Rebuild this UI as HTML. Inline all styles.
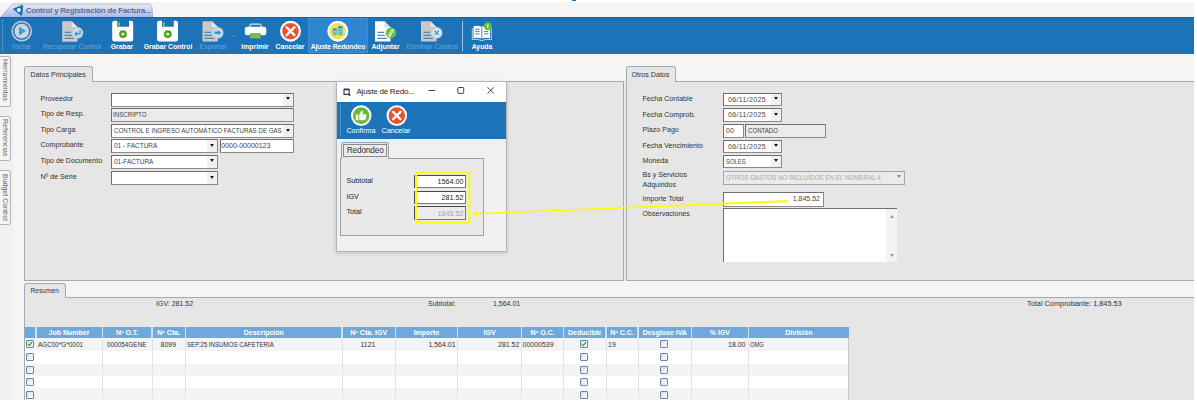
<!DOCTYPE html>
<html lang="es">
<head>
<meta charset="utf-8">
<title>Control y Registración de Facturas</title>
<style>
html,body{margin:0;padding:0;}
body{width:1197px;height:410px;overflow:hidden;background:#fff;position:relative;font-family:"Liberation Sans",sans-serif;font-size:7.2px;color:#3a3a3a;}
div,span,svg,i{position:absolute;box-sizing:border-box;}
.t{white-space:nowrap;line-height:10px;height:10px;}
#app{left:0;top:2px;width:1194px;height:398px;background:#f5f5f5;overflow:hidden;}
#tb{left:0;top:14.7px;width:1194px;height:37.3px;background:#1d73b7;box-shadow:inset 0 1px 0 #17629f;}
.tl{color:#fff;font-weight:bold;font-size:6.85px;top:25.1px;text-align:center;}
.tl.d{color:#6ba6db;font-weight:normal;font-size:7.2px;}
.panel{background:#e6e6e6;border:1px solid #a2abb1;}
.tab{background:#e6e6e6;border:1px solid #a2abb1;border-bottom:none;border-radius:3px 3px 0 0;}
.f{background:#fff;border:1px solid #6e6e6e;border-right-color:#8a8a8a;border-bottom-color:#8a8a8a;height:14px;}
.f.g{background:#ebebeb;}
.f.dd{background:linear-gradient(to left,#f0f0f0 9.5px,#fff 9.5px);}
.f.g.dd{background:#ebebeb;}
.f .t{left:2px;top:1px;color:#444;font-size:7px;}
.arr{width:0;height:0;border-left:2.5px solid transparent;border-right:2.5px solid transparent;border-top:3px solid #1a1a1a;right:2.6px;top:3.6px;}
.lb{font-size:7.1px;color:#333;}
.u{transform:scaleX(.88);transform-origin:0 50%;}
.vt{transform-origin:0 0;transform:rotate(90deg);font-size:7px;color:#666;}
.sidetab{left:-1px;width:11.5px;background:#f5f5f5;border:1px solid #b4b4b4;border-left:none;border-radius:0 3px 3px 0;}
.th{top:0;height:11px;background:#6fa8dc;color:#fff;font-weight:bold;font-size:7px;text-align:center;line-height:11px;white-space:nowrap;overflow:hidden;}
.row{left:0;width:824px;height:12.3px;}
.cb{width:8px;height:8px;border-radius:1px;border:1px solid #6685b2;background:linear-gradient(135deg,#dcdcdc,#fff);}
.vl{top:11px;width:1px;height:62px;background:#e3e3e3;}
.c{font-size:7px;color:#333;}
.dl{text-align:center;color:#fff;font-size:7.2px;}
</style>
</head>
<body>
<div style="left:572px;top:0;width:4px;height:1px;background:#1d73b7"></div>
<div id="app">
  <!-- document tab -->
  <svg style="left:0;top:1px;width:160px;height:15px" viewBox="0 0 160 15">
    <defs><linearGradient id="tg" x1="0" y1="0" x2="0" y2="1"><stop offset="0" stop-color="#e6ecf9"/><stop offset="1" stop-color="#9fb6ea"/></linearGradient></defs>
    <path d="M0 15 L11 2.5 Q12.5 1 15 1 L149 1 Q151.5 1 151.8 3 L153 15 Z" fill="url(#tg)" stroke="#a9a6ac" stroke-width="0.7"/>
    <path d="M13.2 6 L22.2 2.3 Q22.9 2.2 22.8 3 L21.9 11.8 Q21.6 12.6 20.9 12.1 Z" fill="#1d6fb5" stroke="#1d6fb5" stroke-width="0.8" stroke-linejoin="round"/>
    <circle cx="18.9" cy="7" r="1.9" fill="#fff"/>
  </svg>
  <span id="doctab" class="t" style="left:25.7px;top:3.6px;font-size:7.8px;font-weight:bold;color:#6a6a82;letter-spacing:-0.17px">Control y Registración de Factura...</span>

  <!-- toolbar -->
  <div id="tb">
    <div style="left:2px;top:3.6px;width:1px;height:31px;border-left:1px dotted #7fb0de"></div>
    <div style="left:308px;top:1.6px;width:60px;height:34.6px;background:#2e86d0;border:1px solid #3a8fd8"></div>
    <div style="left:462px;top:4.6px;width:1.4px;height:29.3px;background:#9fc4e6"></div>
    <svg style="left:0;top:0;width:520px;height:37px" viewBox="0 16.7 520 37">
      <!-- Iniciar -->
      <circle cx="21.7" cy="30.8" r="9.6" fill="#2a7cc0" stroke="#c4c8cc" stroke-width="1.5"/>
      <circle cx="21.7" cy="30.8" r="7.3" fill="#cfd6dc"/>
      <path d="M19 26.5 L26 30.8 L19 35.1 Z" fill="#2e9fe3"/>
      <!-- Recuperar Control -->
      <path d="M62.2 21 H71.7 L77.5 26.8 V41.4 H62.2 Z" fill="#c9c9c9"/>
      <path d="M71.7 21 L77.5 26.8 H71.7 Z" fill="#e6e6e6"/>
      <path d="M64.5 32 H71 M64.5 35 H72 M64.5 38 H74" stroke="#2678bb" stroke-width="1"/>
      <circle cx="77.5" cy="32.5" r="5.2" fill="#c6dff2" stroke="#c9c9c9" stroke-width="1.2"/>
      <path d="M80 30 V33.5 H75.5 M77 31.8 L75.2 33.5 L77 35.2" fill="none" stroke="#2a8fd6" stroke-width="1.3"/>
      <!-- Grabar -->
      <path d="M112.2 23 Q112.2 20.5 114.7 20.5 H117.2 V26.5 H129 V20.5 H130.7 Q133.2 20.5 133.2 23 V38.8 Q133.2 41.3 130.7 41.3 H114.7 Q112.2 41.3 112.2 38.8 Z" fill="#fff"/>
      <rect x="118.2" y="22" width="1.8" height="3.8" fill="#84cc20"/>
      <circle cx="123" cy="33.8" r="3.9" fill="#4aa31e"/>
      <circle cx="123" cy="33.8" r="1.6" fill="#e3f5cf"/>
      <!-- Grabar Control -->
      <path d="M157 23 Q157 20.5 159.5 20.5 H162 V26.5 H173.8 V20.5 H175.5 Q178 20.5 178 23 V38.8 Q178 41.3 175.5 41.3 H159.5 Q157 41.3 157 38.8 Z" fill="#fff"/>
      <rect x="163" y="22" width="1.8" height="3.8" fill="#84cc20"/>
      <circle cx="167.8" cy="33.8" r="3.9" fill="#4aa31e"/>
      <circle cx="167.8" cy="33.8" r="1.6" fill="#e3f5cf"/>
      <!-- Exportar -->
      <path d="M202.5 21 H212 L217.8 26.8 V41.3 H202.5 Z" fill="#c9c9c9"/>
      <path d="M212 21 L217.8 26.8 H212 Z" fill="#e6e6e6"/>
      <path d="M204.5 32 H211 M204.5 35 H212 M204.5 38 H214" stroke="#2678bb" stroke-width="1"/>
      <circle cx="217.8" cy="32.5" r="5.2" fill="#c6dff2" stroke="#c9c9c9" stroke-width="1.2"/>
      <path d="M214.5 31.3 H218 V29.7 L221.3 32.5 L218 35.3 V33.7 H214.5 Z" fill="#2a9be0"/>
      <path d="M232 35 H235.2 L233.6 36.6 Z" fill="#5f9fd6"/>
      <!-- Imprimir -->
      <rect x="250" y="23.8" width="11" height="4" rx="0.8" fill="none" stroke="#fff" stroke-width="1"/>
      <rect x="244.8" y="26.5" width="21.5" height="8.4" rx="2.2" fill="#fff"/>
      <rect x="249.8" y="33.4" width="11.2" height="5" rx="1.2" fill="#7ac043" stroke="#1d73b7" stroke-width="0.6"/>
      <!-- Cancelar -->
      <circle cx="290.5" cy="30.9" r="9.4" fill="#e9532d" stroke="#fff" stroke-width="2.2"/>
      <path d="M286.6 27 L294.4 34.8 M294.4 27 L286.6 34.8" stroke="#fff" stroke-width="2.3" stroke-linecap="round"/>
      <!-- Ajuste Redondeo -->
      <circle cx="337.8" cy="30.9" r="9.4" fill="#f3e155" stroke="#fff" stroke-width="2.2"/>
      <rect x="332.6" y="28.6" width="4.6" height="6.4" rx="1" fill="#5fb3b0"/>
      <rect x="337.8" y="26.4" width="5" height="8.6" rx="1" fill="#5fb3b0"/>
      <ellipse cx="334.9" cy="28.8" rx="2.3" ry="0.9" fill="#2f8fd0"/>
      <ellipse cx="340.3" cy="26.6" rx="2.5" ry="0.9" fill="#2f8fd0"/>
      <path d="M332.6 31 H337.2 M332.6 33 H337.2 M337.8 29 H342.8 M337.8 31 H342.8 M337.8 33 H342.8" stroke="#d8e38a" stroke-width="0.5"/>
      <!-- Adjuntar -->
      <path d="M375 21 H384.5 L390.5 27 V41.3 H375 Z" fill="#fff"/>
      <path d="M384.5 21 L390.5 27 H384.5 Z" fill="#cfe0f0"/>
      <path d="M377.5 32 H384 M377.5 35 H385 M377.5 38 H387" stroke="#1d73b7" stroke-width="1"/>
      <circle cx="391" cy="32.5" r="5.3" fill="#6cbf3a"/>
      <path d="M389.6 35 L392.4 30" stroke="#fff" stroke-width="2.6" stroke-linecap="round"/>
      <path d="M389.6 35 L392.4 30" stroke="#6cbf3a" stroke-width="0.9" stroke-linecap="round"/>
      <!-- Eliminar Control -->
      <path d="M421 21 H430.5 L436.5 27 V41.3 H421 Z" fill="#c9c9c9"/>
      <path d="M430.5 21 L436.5 27 H430.5 Z" fill="#e6e6e6"/>
      <path d="M423.5 32 H430 M423.5 35 H431 M423.5 38 H433" stroke="#2678bb" stroke-width="1"/>
      <circle cx="436.7" cy="32.5" r="5.2" fill="#d8e8f4" stroke="#c9c9c9" stroke-width="1.2"/>
      <path d="M434.6 30.4 L438.8 34.6 M438.8 30.4 L434.6 34.6" stroke="#2a9be0" stroke-width="1.3"/>
      <!-- Ayuda -->
      <path d="M473.5 26 Q477.5 24.6 481.4 26.3 V38.3 Q477.5 36.8 473.5 38 Z" fill="#fff"/>
      <path d="M490 26 Q486 24.6 482.2 26.3 V38.3 Q486 36.8 490 38 Z" fill="#fff"/>
      <path d="M472.3 28 V39.3 Q478 38.3 481.8 40.3 Q485.6 38.3 491.3 39.3 V28" fill="none" stroke="#cfe0f0" stroke-width="0.9"/>
      <path d="M475.3 29 H479.6 M475.3 31.3 H479.6 M475.3 33.6 H479.6 M484 31.3 H488.3 M484 33.6 H488.3" stroke="#1d73b7" stroke-width="0.9"/>
      <circle cx="487.8" cy="25.9" r="3.9" fill="#6cbf3a"/>
      <path d="M487.8 24 V27.8" stroke="#fff" stroke-width="1"/>
    </svg>
    <span class="t tl d" style="left:10px;width:23px">Iniciar</span>
    <span class="t tl d" style="left:41px;width:62px">Recuperar Control</span>
    <span class="t tl" style="left:108px;width:28px">Grabar</span>
    <span class="t tl" style="left:140px;width:56px">Grabar Control</span>
    <span class="t tl d" style="left:197px;width:32px">Exportar</span>
    <span class="t tl" style="left:239px;width:32px">Imprimir</span>
    <span class="t tl" style="left:274px;width:32px">Cancelar</span>
    <span class="t tl" style="left:308px;width:60px;letter-spacing:-0.12px">Ajuste Redondeo</span>
    <span class="t tl" style="left:369px;width:33px">Adjuntar</span>
    <span class="t tl d" style="left:402px;width:60px">Eliminar Control</span>
    <span class="t tl" style="left:470px;width:24px">Ayuda</span>
  </div>

  <!-- left vertical tabs -->
  <div style="left:0;top:52px;width:12.5px;height:346px;background:#f0f0f0"></div>
  <div class="sidetab" style="top:54px;height:50.7px"></div>
  <div class="sidetab" style="top:113.5px;height:45.8px"></div>
  <div class="sidetab" style="top:168.3px;height:54.3px"></div>
  <span class="t vt" style="left:9.5px;top:56.8px">Herramientas</span>
  <span class="t vt" style="left:9.5px;top:117.2px">Referencias</span>
  <span class="t vt" style="left:9.5px;top:172px">Budget Control</span>

  <!-- Datos Principales -->
  <div style="left:622px;top:80px;width:6px;height:198px;background:#ebebeb"></div>
  <div class="panel" style="left:24px;top:79px;width:600px;height:199.7px"></div>
  <div class="tab" style="left:24px;top:64.3px;width:68.5px;height:15.7px"></div>
  <span class="t lb" style="left:30.5px;top:67.5px">Datos Principales</span>

  <span class="t lb" style="left:40.5px;top:91.6px">Proveedor</span>
  <span class="t lb" style="left:40.5px;top:107.4px">Tipo de Resp.</span>
  <span class="t lb" style="left:40.5px;top:123px">Tipo Carga</span>
  <span class="t lb" style="left:40.5px;top:138.4px">Comprobante</span>
  <span class="t lb" style="left:40.5px;top:153.8px">Tipo de Documento</span>
  <span class="t lb" style="left:40.5px;top:170px">Nº de Serie</span>

  <div class="f dd" style="left:111px;top:90.5px;width:183px"><i class="arr"></i></div>
  <div class="f g" style="left:111px;top:106.4px;width:183px;height:13.4px"><span class="t u" style="left:0.5px">INSCRIPTO</span></div>
  <div class="f dd" style="left:111px;top:122px;width:183px"><span class="t u">CONTROL E INGRESO AUTOMÁTICO FACTURAS DE GAS</span><i class="arr"></i></div>
  <div class="f dd" style="left:111px;top:137px;width:107px"><span class="t u" style="transform:scaleX(.93)">01 - FACTURA</span><i class="arr"></i></div>
  <div class="f" style="left:219.5px;top:137px;width:74.5px"><span class="t" style="left:0.8px">0000-00000123</span></div>
  <div class="f dd" style="left:111px;top:152.8px;width:107px"><span class="t u" style="transform:scaleX(.92)">01-FACTURA</span><i class="arr"></i></div>
  <div class="f dd" style="left:111px;top:169.4px;width:107px"><i class="arr"></i></div>

  <!-- Otros Datos -->
  <div class="panel" style="left:626.4px;top:79px;width:570.6px;height:199.7px"></div>
  <div class="tab" style="left:626.4px;top:64.3px;width:49.8px;height:15.7px"></div>
  <span class="t lb" style="left:631.5px;top:67.5px">Otros Datos</span>

  <span class="t lb" style="left:642.5px;top:92px">Fecha Contable</span>
  <span class="t lb" style="left:642.5px;top:107.8px">Fecha Comprob.</span>
  <span class="t lb" style="left:642.5px;top:122.8px">Plazo Pago</span>
  <span class="t lb" style="left:642.5px;top:139px">Fecha Vencimiento</span>
  <span class="t lb" style="left:642.5px;top:154.4px">Moneda</span>
  <span class="t lb" style="left:642.5px;top:168px">Bs y Servicios</span>
  <span class="t lb" style="left:642.5px;top:177.7px">Adquiridos</span>
  <span class="t lb" style="left:642.5px;top:191.6px">Importe Total</span>
  <span class="t lb" style="left:642.5px;top:207.1px">Observaciones</span>

  <div class="f dd" style="left:723px;top:90.7px;width:58.5px;height:13.6px"><span class="t" style="left:4px;letter-spacing:.34px">06/11/2025</span><i class="arr"></i></div>
  <div class="f dd" style="left:723px;top:106.3px;width:58.5px;height:13.6px"><span class="t" style="left:4px;letter-spacing:.34px">06/11/2025</span><i class="arr"></i></div>
  <div class="f" style="left:723px;top:121.6px;width:20.5px"><span class="t">00</span></div>
  <div class="f g" style="left:745px;top:121.6px;width:81px"><span class="t u" style="transform:scaleX(.87)">CONTADO</span></div>
  <div class="f dd" style="left:723px;top:137.5px;width:58.5px;height:13.6px"><span class="t" style="left:4px;letter-spacing:.34px">06/11/2025</span><i class="arr"></i></div>
  <div class="f dd" style="left:723px;top:152.5px;width:58.5px;height:13.6px"><span class="t u" style="transform:scaleX(.84)">SOLES</span><i class="arr"></i></div>
  <div class="f g dd" style="left:722.5px;top:168.5px;width:182.5px;border-color:#a6a6a6"><span class="t u" style="color:#a9a9a9;transform:scaleX(.9)">OTROS GASTOS NO INCLUÍDOS EN EL NUMERAL 4</span><i class="arr" style="border-top-color:#8a8a8a"></i></div>
  <div class="f" style="left:722.5px;top:190.3px;width:101.5px;height:14.6px"><span class="t" style="left:auto;right:3px">1,845.52</span></div>
  <div style="left:722.5px;top:206.2px;width:174px;height:53.4px;background:#fff;border-top:1px solid #6e6e6e;border-left:1px solid #6e6e6e">
    <div style="right:0;top:0;width:11px;height:52.4px;background:#f3f3f3"></div>
    <i style="position:absolute;right:3px;top:5.5px;width:0;height:0;border-left:2.4px solid transparent;border-right:2.4px solid transparent;border-bottom:3px solid #9a9a9a"></i>
    <i style="position:absolute;right:3px;bottom:4.5px;width:0;height:0;border-left:2.4px solid transparent;border-right:2.4px solid transparent;border-top:3px solid #9a9a9a"></i>
  </div>

  <!-- Resumen -->
  <div class="panel" style="left:24px;top:295px;width:1173px;height:110px"></div>
  <div class="tab" style="left:24px;top:281px;width:42px;height:15px"></div>
  <span class="t lb" style="left:30.6px;top:283.8px;font-size:6.6px">Resumen</span>
  <span class="t lb" style="left:156px;top:297px;font-size:7px">IGV: 281.52</span>
  <span class="t lb" style="left:428px;top:297px;font-size:7px">Subtotal:</span>
  <span class="t lb" style="left:493px;top:297px;font-size:7px">1,564.01</span>
  <span class="t lb" style="left:1027px;top:297px;font-size:7.35px">Total Comprobante: 1,845.53</span>

  <!-- grid -->
  <div id="grid" style="left:25px;top:325px;width:824px;height:73px;background:#fff;overflow:hidden">
    <div class="row" style="top:11px;background:#f4f4f4;height:13.3px"></div>
    <div class="row" style="top:36.8px;background:#f4f4f4;height:12.2px"></div>
    <div class="row" style="top:61.4px;background:#f4f4f4;height:11.6px"></div>
    <div class="vl" style="left:76.5px"></div>
    <div class="vl" style="left:126.5px"></div>
    <div class="vl" style="left:160px"></div>
    <div class="vl" style="left:316.6px"></div>
    <div class="vl" style="left:370px"></div>
    <div class="vl" style="left:432px"></div>
    <div class="vl" style="left:496px"></div>
    <div class="vl" style="left:538px"></div>
    <div class="vl" style="left:580.5px"></div>
    <div class="vl" style="left:612.5px"></div>
    <div class="vl" style="left:666px"></div>
    <div class="vl" style="left:722.5px"></div>
    <div class="vl" style="left:823px;background:#c8c8c8"></div>

    <div style="left:0;top:0;width:824px;height:11px;background:#cfe0f1"></div>
    <div class="th" style="left:0;width:10.2px"></div>
    <div class="th" style="left:11.5px;width:65px">Job Number</div>
    <div class="th" style="left:77.8px;width:48.6px">Nº O.T.</div>
    <div class="th" style="left:127.6px;width:32.2px">Nº Cta.</div>
    <div class="th" style="left:161.2px;width:155.2px">Descripción</div>
    <div class="th" style="left:317.6px;width:52.2px">Nº Cta. IGV</div>
    <div class="th" style="left:371px;width:61px">Importe</div>
    <div class="th" style="left:433.2px;width:62.8px">IGV</div>
    <div class="th" style="left:497.2px;width:40.8px">Nº O.C.</div>
    <div class="th" style="left:539.2px;width:41.2px">Deducible</div>
    <div class="th" style="left:581.6px;width:30.8px">Nº C.C.</div>
    <div class="th" style="left:613.6px;width:52.4px">Desglose IVA</div>
    <div class="th" style="left:667.2px;width:55.4px">% IGV</div>
    <div class="th" style="left:723.8px;width:100.2px">División</div>

    <div class="cb" style="left:0.6px;top:13.4px"><svg style="left:0;top:0;width:6px;height:6px" viewBox="0 0 6 6"><path d="M1 3 L2.4 4.6 L5 1.2" fill="none" stroke="#2a9a2a" stroke-width="1.1"/></svg></div>
    <div class="cb" style="left:0.6px;top:26px"></div>
    <div class="cb" style="left:0.6px;top:38.7px"></div>
    <div class="cb" style="left:0.6px;top:51.3px"></div>
    <div class="cb" style="left:0.6px;top:63.7px"></div>

    <div class="cb" style="left:554.9px;top:13.4px"><svg style="left:0;top:0;width:6px;height:6px" viewBox="0 0 6 6"><path d="M1 3 L2.4 4.6 L5 1.2" fill="none" stroke="#2a9a2a" stroke-width="1.1"/></svg></div>
    <div class="cb" style="left:554.9px;top:26px"></div>
    <div class="cb" style="left:554.9px;top:38.7px"></div>
    <div class="cb" style="left:554.9px;top:51.3px"></div>
    <div class="cb" style="left:554.9px;top:63.7px"></div>

    <div class="cb" style="left:635px;top:13.4px"></div>
    <div class="cb" style="left:635px;top:26px"></div>
    <div class="cb" style="left:635px;top:38.7px"></div>
    <div class="cb" style="left:635px;top:51.3px"></div>
    <div class="cb" style="left:635px;top:63.7px"></div>

    <span class="t c u" style="left:12.5px;top:12.8px;transform:scaleX(.91)">AGC00*G*0001</span>
    <span class="t c u" style="left:81.7px;top:12.8px;transform:scaleX(.915)">000054GENE</span>
    <span class="t c" style="left:135.5px;top:12.8px">8099</span>
    <span class="t c u" style="left:161.7px;top:12.8px">SEP.25 INSUMOS CAFETERIA</span>
    <span class="t c" style="left:335.4px;top:12.8px">1121</span>
    <span class="t c" style="left:403.4px;top:12.8px">1,564.01</span>
    <span class="t c" style="left:473px;top:12.8px">281.52</span>
    <span class="t c" style="left:497.5px;top:12.8px">00000539</span>
    <span class="t c" style="left:583px;top:12.8px">19</span>
    <span class="t c" style="left:703px;top:12.8px">18.00</span>
    <span class="t c u" style="left:724.7px;top:12.8px;transform:scaleX(.82)">OMG</span>
  </div>

  <!-- dialog -->
  <div id="dlg" style="left:335.6px;top:79px;width:171.4px;height:170.5px;background:#f0f0f0;border:1px solid #b4b4b4;box-shadow:0 1px 4px rgba(0,0,0,0.16)">
   <div style="left:0.9px;top:0;width:168.5px;height:168.5px">
    <div style="left:-0.9px;top:0;width:169.4px;height:20px;background:#fff"></div>
    <svg style="left:5.5px;top:5.5px;width:9px;height:9px" viewBox="0 0 9 9"><path d="M1 1.6 H6.2 V6.4 H1 Z" fill="#fff" stroke="#2b3550" stroke-width="1.1"/><path d="M1 1.3 H6.2" stroke="#2b3550" stroke-width="1.6"/><path d="M5.4 5.6 L8 7 L6 8.2 Z" fill="#2b3550"/></svg>
    <span class="t" style="left:19px;top:4.8px;font-size:8px;letter-spacing:-0.22px;color:#1e1e1e">Ajuste de Redo...</span>
    <svg style="left:88px;top:2.4px;width:76px;height:13px" viewBox="0 0 76 13"><path d="M3.6 6.5 H10.2" stroke="#2a2a2a" stroke-width="0.9"/><rect x="32.8" y="3.5" width="5.9" height="5.9" rx="0.8" fill="none" stroke="#2a2a2a" stroke-width="0.9"/><path d="M62.6 3.3 L68.8 9.5 M68.8 3.3 L62.6 9.5" stroke="#2a2a2a" stroke-width="0.9"/></svg>
    <div style="left:-0.9px;top:20px;width:169.4px;height:37px;background:#1d73b7"></div>
    <div style="left:3px;top:23px;width:1px;height:31px;border-left:1px dotted #7fb0de"></div>
    <svg style="left:9.5px;top:21px;width:70px;height:26px" viewBox="347 103 70 26">
      <circle cx="361.2" cy="115.6" r="9.3" fill="#6ab53c" stroke="#fff" stroke-width="2"/>
      <path d="M355.8 114.6 H358.4 V120.2 H355.8 Z M359.2 114.8 L361.6 110.4 Q363.4 110.4 362.9 112.6 L362.5 114.2 H365.6 Q366.9 114.4 366.6 115.8 L365.6 119.4 Q365.3 120.2 364.4 120.2 H359.2 Z" fill="#f2f8e8"/>
      <circle cx="396.8" cy="115.6" r="9.3" fill="#e9532d" stroke="#fff" stroke-width="2"/>
      <path d="M393.1 111.9 L400.5 119.3 M400.5 111.9 L393.1 119.3" stroke="#fff" stroke-width="2.3" stroke-linecap="round"/>
    </svg>
    <span class="t dl" style="left:4.5px;top:44.3px;width:38px">Confirma</span>
    <span class="t dl" style="left:39.5px;top:44.3px;width:38px">Cancelar</span>

    <div style="left:3px;top:75.6px;width:143.5px;height:78.4px;border:1px solid #98a2ac;background:#e9e9e9"></div>
    <div style="left:4px;top:60px;width:47.5px;height:16.6px;border:1px solid #98a2ac;border-bottom:none;border-radius:3px 3px 0 0;background:#e9e9e9"></div>
    <div style="left:5.8px;top:61.8px;width:44px;height:13.4px;border:1px solid #8a8a8a;background:#ececec"></div>
    <span class="t" style="left:9.2px;top:63.5px;font-size:8.2px;letter-spacing:-0.1px;color:#333">Redondeo</span>

    <span class="t" style="left:9px;top:94.2px;font-size:7.2px;color:#222">Subtotal</span>
    <span class="t" style="left:9px;top:109.6px;font-size:7.2px;color:#222">IGV</span>
    <span class="t" style="left:9px;top:125.4px;font-size:7.2px;color:#222">Total</span>
    <div class="f" style="left:76.6px;top:92.6px;width:51.8px;height:13.4px;border-color:#4a4a4a #777 #777 #4a4a4a"><span class="t" style="left:auto;right:1.3px;top:1.3px;color:#222;font-size:7.2px">1564.00</span></div>
    <div class="f" style="left:76.6px;top:108.5px;width:51.8px;height:13.4px;border-color:#4a4a4a #777 #777 #4a4a4a"><span class="t" style="left:auto;right:1.3px;top:1.3px;color:#222;font-size:7.2px">281.52</span></div>
    <div class="f g" style="left:76.6px;top:124.3px;width:51.8px;height:13.5px;border-color:#4a4a4a #777 #777 #4a4a4a"><span class="t" style="left:auto;right:1.3px;top:1.4px;color:#a5a5a5;font-size:7.2px">1845.52</span></div>
   </div>
  </div>

  <!-- annotations -->
  <svg style="left:0;top:0;width:1194px;height:398px" viewBox="0 2 1194 398">
    <rect x="416" y="172.4" width="53.4" height="50.2" fill="none" stroke="#fbfb10" stroke-width="2"/>
    <path d="M476 213 L788 199.9 L788 202.1 L476 214.5 Z" fill="#fbfb10"/>
    <path d="M472.4 213.7 L478.6 210.9 L478.8 216.6 Z" fill="#fbfb10"/>
  </svg>
</div>
</body>
</html>
